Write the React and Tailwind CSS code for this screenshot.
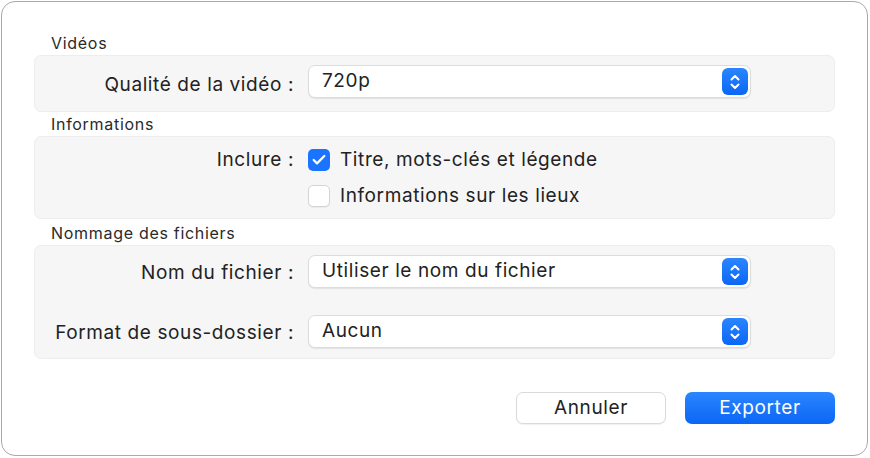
import { Check } from 'lucide-react';

const font = { fontFamily: 'Inter, "Noto Sans", sans-serif' };

function Stepper() {
    return (
        <div className="flex h-[27px] w-[26px] items-center justify-center rounded-[6px] bg-gradient-to-b from-[#2a85ff] to-[#0a66f5]">
            <svg width="12" height="18" viewBox="0 0 12 18" fill="none" stroke="white" strokeWidth="2" strokeLinecap="round" strokeLinejoin="round">
                <path d="M2.5 6.5 6 3l3.5 3.5" />
                <path d="M2.5 11.5 6 15l3.5-3.5" />
            </svg>
        </div>
    );
}

function Select({ value }) {
    return (
        <div className="flex h-[33px] w-[443px] items-center justify-between rounded-[7px] border border-[#dcdcdc] bg-white pl-[13px] pr-[2px] shadow-[0_1px_1px_rgba(0,0,0,0.08)]">
            <span className="text-[19px] tracking-[0.6px] text-[#222]">{value}</span>
            <Stepper />
        </div>
    );
}

function Checkbox({ checked }) {
    return checked ? (
        <div className="flex h-[22px] w-[22px] items-center justify-center rounded-[5px] bg-[#1a74ff]">
            <Check className="h-[16px] w-[16px] text-white" strokeWidth={3.4} />
        </div>
    ) : (
        <div className="h-[22px] w-[22px] rounded-[5px] border border-[#d4d4d4] bg-white shadow-[0_1px_1px_rgba(0,0,0,0.05)]" />
    );
}

function Header({ children, className = '' }) {
    return <div className={'pl-[17px] text-[16px] tracking-[0.7px] text-[#2a2a2a] ' + className}>{children}</div>;
}

function Group({ children, className = '' }) {
    return (
        <div className={'rounded-[7px] border border-[#ededed] bg-[#f6f6f6] ' + className}>{children}</div>
    );
}

function Label({ children, className = '' }) {
    return <div className={'w-[259px] text-right text-[19px] tracking-[0.6px] text-[#222] ' + className}>{children}</div>;
}

export default function App() {
    return (
        <div className="h-[458px] w-[870px] bg-white p-[1px]" style={font}>
            <div className="flex h-[455px] w-[867px] flex-col rounded-[14px] border border-[#a9a9a9] bg-white px-[32px] pt-[30px]">
                <Header className="h-[23px] leading-[23px]">Vidéos</Header>
                <Group className="flex h-[57px] items-start gap-[14px] pt-[9px]">
                    <Label className="pt-[6px]">Qualité de la vidéo :</Label>
                    <Select value="720p" />
                </Group>

                <Header className="h-[24px] leading-[24px]">Informations</Header>
                <Group className="flex h-[83px] flex-col gap-[14px] pt-[12px]">
                    <div className="flex h-[22px] items-center gap-[14px]">
                        <Label>Inclure :</Label>
                        <div className="flex items-center gap-[10px]">
                            <Checkbox checked />
                            <span className="text-[19px] tracking-[0.6px] text-[#222]">Titre, mots-clés et légende</span>
                        </div>
                    </div>
                    <div className="flex h-[22px] items-center gap-[14px]">
                        <div className="w-[259px]" />
                        <div className="flex items-center gap-[10px]">
                            <Checkbox />
                            <span className="text-[19px] tracking-[0.6px] text-[#222]">Informations sur les lieux</span>
                        </div>
                    </div>
                </Group>

                <Header className="h-[26px] leading-[28px]">Nommage des fichiers</Header>
                <Group className="flex h-[114px] flex-col gap-[27px] pt-[9px]">
                    <div className="flex h-[33px] items-start gap-[14px]">
                        <Label className="pt-[4px]">Nom du fichier :</Label>
                        <Select value="Utiliser le nom du fichier" />
                    </div>
                    <div className="flex h-[33px] items-start gap-[14px]">
                        <Label className="pt-[4px]">Format de sous-dossier :</Label>
                        <Select value="Aucun" />
                    </div>
                </Group>

                <div className="mt-[33px] flex justify-end gap-[19px]">
                    <button className="h-[32px] w-[150px] rounded-[7px] border border-[#dadada] bg-white text-[19px] tracking-[0.6px] text-[#222] shadow-[0_1px_1px_rgba(0,0,0,0.06)]">
                        Annuler
                    </button>
                    <button className="h-[32px] w-[150px] rounded-[7px] bg-gradient-to-b from-[#2a85ff] to-[#0a66f5] text-[19px] tracking-[0.6px] text-white">
                        Exporter
                    </button>
                </div>
            </div>
        </div>
    );
}
